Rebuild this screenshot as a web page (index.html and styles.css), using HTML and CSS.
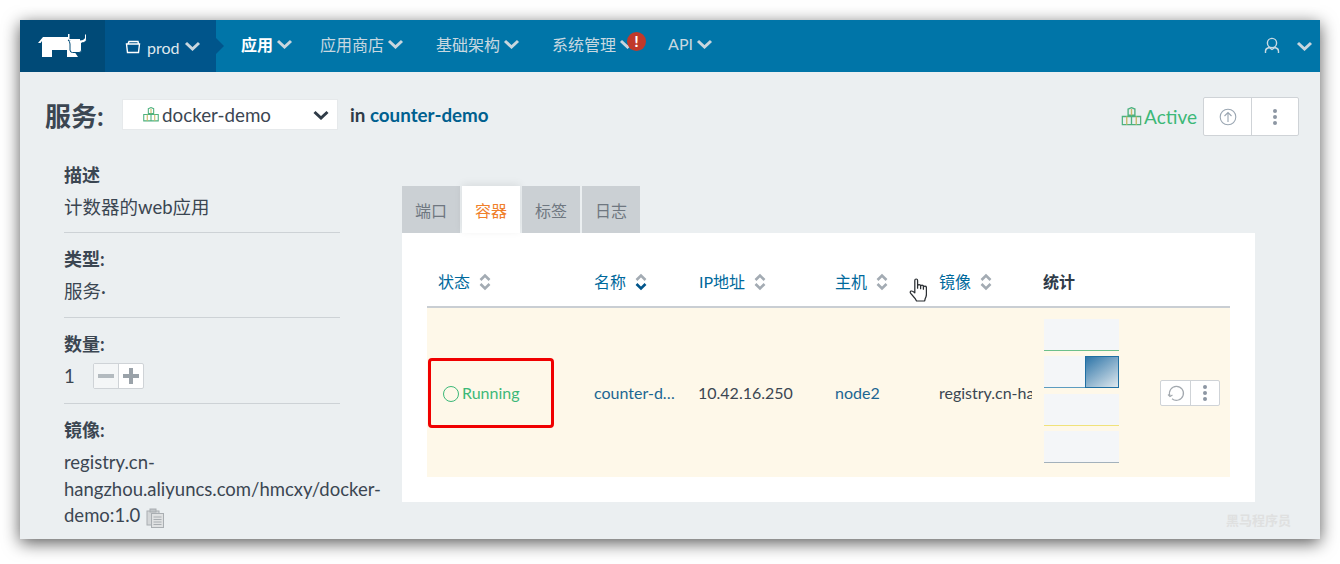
FILE: index.html
```html
<!DOCTYPE html>
<html lang="zh">
<head>
  <meta charset="UTF-8" />
  <title>服务 docker-demo</title>
  <link rel="stylesheet" href="styles.css">
</head>
<body>
  <div class="app">

    <!-- Header -->
    <header class="topbar">
      <a class="logo">
        <svg width="50" height="26" viewBox="0 0 50 26">
          <path fill="#fff" d="M5 5 H30 V2 H31.500 V7 H36 V19 L40 25 H29 V18 H14 V25 H4 V9 L2.500 11 H0 Z"/>
          <path fill="#fff" stroke="#004a77" d="M30 8 H42 Q46 8 46.500 6 V2 H48.500 V7 Q48.500 10.500 43.500 11 V18 Q43.500 20.500 41 20.500 H34.500 Q32 20.500 32 18 V12 Q32 9.500 30 8 Z"/>
          <path fill="#fff" d="M30 7 H42 V9 H33 Z"/>
        </svg>
      </a>
      <a class="env">
        <svg class="folder" width="16" height="14" viewBox="0 0 16 14"><path fill="none" stroke="#fff" stroke-width="1.4" d="M1.5 4 H14.5 L13.5 12.5 H2.5 Z M3 4 L4 1.5 H13 L13.5 4"/></svg>
        prod
        <svg class="chev" width="17" height="10" viewBox="0 0 17 10"><path d="M2 2 L8.500 8 L15 2"/></svg>
      </a>
      <nav class="mainnav">
        <a class="active">应用<svg class="chev" width="17" height="10" viewBox="0 0 17 10"><path d="M2 2 L8.500 8 L15 2"/></svg></a>
        <a>应用商店<svg class="chev" width="17" height="10" viewBox="0 0 17 10"><path d="M2 2 L8.500 8 L15 2"/></svg></a>
        <a>基础架构<svg class="chev" width="17" height="10" viewBox="0 0 17 10"><path d="M2 2 L8.500 8 L15 2"/></svg></a>
        <a class="has-alert">系统管理<svg class="chev" width="17" height="10" viewBox="0 0 17 10"><path d="M2 2 L8.500 8 L15 2"/></svg><span class="alert">!</span></a>
        <a>API<svg class="chev" width="17" height="10" viewBox="0 0 17 10"><path d="M2 2 L8.500 8 L15 2"/></svg></a>
      </nav>
      <div class="usermenu">
        <svg width="16" height="18" viewBox="0 0 16 18"><g fill="none" stroke="#c8dae3" stroke-width="1.4"><circle cx="8" cy="6" r="4.6"/><path d="M1.5 16 V14 Q1.5 11.5 5 10.5 L8 12.5 L11 10.5 Q14.500 11.5 14.500 14 V16"/></g></svg>
        <svg class="chev" width="17" height="10" viewBox="0 0 17 10"><path d="M2 2 L8.500 8 L15 2"/></svg>
      </div>
    </header>

    <!-- Titelzeile -->
    <div class="titlerow">
      <h1>服务:</h1>
      <div class="svc-select">
        <svg class="cubes" width="16" height="15" viewBox="0 0 15 14"><use href="#cubes-icon"/></svg>
        <span>docker-demo</span>
        <svg class="select-chev" width="16" height="10" viewBox="0 0 16 10"><path d="M1.5 2 L8 8 L14.500 2"/></svg>
      </div>
      <div class="stack-name">in <a>counter-demo</a></div>
      <div class="title-right">
        <span class="state">
          <svg width="21" height="19" viewBox="0 0 15 14"><use href="#cubes-icon"/></svg>
          Active
        </span>
        <div class="btn-group big">
          <button class="up-btn"><svg width="18" height="18" viewBox="0 0 18 18"><g fill="none" stroke="#9aa6b2" stroke-width="1.1"><circle cx="9" cy="9" r="7.800"/><path d="M9 14 V4.500 M5.500 8 L9 4.500 L12.500 8"/></g></svg></button>
          <button class="dots-btn"><span class="dots"><i></i><i></i><i></i></span></button>
        </div>
      </div>
    </div>

    <div class="content">
      <!-- Linke Spalte -->
      <aside class="info">
        <section>
          <div class="label">描述</div>
          <div class="value">计数器的web应用</div>
        </section>
        <section>
          <div class="label">类型:</div>
          <div class="value">服务·</div>
        </section>
        <section class="scale">
          <div class="label">数量:</div>
          <div class="value scale-row">
            <span class="count">1</span>
            <div class="stepper"><span class="minus"></span><span class="plus"></span></div>
          </div>
        </section>
        <section class="image">
          <div class="label">镜像:</div>
          <div class="value">registry.cn-hangzhou.aliyuncs.com/hmcxy/docker-demo:1.0
            <svg class="copy" width="19" height="20" viewBox="0 0 19 20"><g fill="none" stroke="#a9aeb2"><rect x="1" y="3" width="12" height="14" fill="#d4d7d9"/><rect x="5.500" y="5.500" width="12" height="14" fill="#dfe1e2"/><path d="M7.500 9 H15.500 M7.500 11.500 H15.500 M7.500 14 H15.500 M7.500 16.500 H15.500"/><rect x="4" y="1" width="6" height="3" fill="#bfc3c6"/></g></svg>
          </div>
        </section>
      </aside>

      <!-- Tabs und Tabelle -->
      <div class="detail">
        <ul class="tabs">
          <li>端口</li>
          <li class="current">容器</li>
          <li>标签</li>
          <li>日志</li>
        </ul>
        <div class="panel">
          <table>
            <colgroup>
              <col class="c-state"><col class="c-name"><col class="c-ip"><col class="c-host"><col class="c-image"><col class="c-stats"><col>
            </colgroup>
            <thead>
              <tr>
                <th class="first">状态<svg class="sort" width="12" height="18" viewBox="0 0 12 18"><path d="M1.500 7 L6 2.500 L10.500 7 M1.500 11 L6 15.500 L10.500 11"/></svg></th>
                <th>名称<svg class="sort sorted" width="12" height="18" viewBox="0 0 12 18"><path d="M1.500 7 L6 2.500 L10.500 7"/><path class="on" d="M1.500 11 L6 15.500 L10.500 11"/></svg></th>
                <th>IP地址<svg class="sort" width="12" height="18" viewBox="0 0 12 18"><path d="M1.500 7 L6 2.500 L10.500 7 M1.500 11 L6 15.500 L10.500 11"/></svg></th>
                <th>主机<svg class="sort" width="12" height="18" viewBox="0 0 12 18"><path d="M1.500 7 L6 2.500 L10.500 7 M1.500 11 L6 15.500 L10.500 11"/></svg></th>
                <th>镜像<svg class="sort" width="12" height="18" viewBox="0 0 12 18"><path d="M1.500 7 L6 2.500 L10.500 7 M1.500 11 L6 15.500 L10.500 11"/></svg></th>
                <th class="plain">统计</th>
                <th></th>
              </tr>
            </thead>
            <tbody>
              <tr>
                <td class="running"><span class="ring"></span>Running</td>
                <td class="link"><div class="clip dots-end">counter-demo-1</div></td>
                <td>10.42.16.250</td>
                <td class="link">node2</td>
                <td class="img-cell"><div class="clip">registry.cn-hangzhou.aliyuncs.com</div></td>
                <td class="stats">
                  <div class="spark green"></div>
                  <div class="spark blue"><span class="spark-fill"></span></div>
                  <div class="spark yellow"></div>
                  <div class="spark grey"></div>
                </td>
                <td>
                  <div class="btn-group small">
                    <button><svg width="18" height="18" viewBox="0 0 18 18"><g fill="none" stroke="#a3a9af" stroke-width="1.200"><path d="M3 12 A7 7 0 1 1 5 14.700"/><path d="M1 10.500 L3 12.500 L5.500 11"/></g></svg></button>
                    <button><span class="dots"><i></i><i></i><i></i></span></button>
                  </div>
                </td>
              </tr>
            </tbody>
          </table>
        </div>
      </div>
    </div>

    <!-- Overlays aus dem Screenshot -->
    <div class="redbox"></div>
    <svg class="hand" width="18" height="24" viewBox="0 0 15.500 23.500" preserveAspectRatio="none"><path fill="#fff" stroke="#2b2f33" stroke-width="1.100" stroke-linejoin="round" d="M5 13 V2.500 Q5 1 6.200 1 Q7.400 1 7.400 2.500 V10 V7.500 Q7.400 6.500 8.700 6.500 Q10 6.500 10 7.500 V10.500 V8 Q10 7 11.200 7 Q12.400 7 12.400 8 V11 V9 Q12.400 8 13.600 8 Q15 8 15 9.500 V16 Q15 18 14 20 L13.500 22.500 H6.500 L5.500 20.500 L1.500 15 Q0.500 13.500 1.800 12.800 Q3 12.300 5 14.500 Z"/></svg>
    <div class="watermark">黑马程序员</div>
  </div>

  <svg class="defs" width="0" height="0">
    <symbol id="cubes-icon" viewBox="0 0 15 14">
      <g fill="none" stroke-width="1">
        <path stroke="#4cb17e" d="M5 1.500 L7.500 .5 L10 1.500 V6 H5 Z M.7 7 H7.500 V13 H.7 Z M7.500 7 H14.300 V13 H7.500 Z"/>
        <path stroke="#c9b867" d="M4 7 V13 M11 7 V13 M7.500 1.500 V6"/>
      </g>
    </symbol>
  </svg>
</body>
</html>
```

FILE: styles.css
```css
html, body {
  margin: 0;
  padding: 0;
}
body {
  box-sizing: border-box;
  width: 1340px;
  height: 564px;
  padding: 20px;
  overflow: hidden;
  background-color: #fff;
  font-family: Lato, "Noto Sans CJK SC", sans-serif;
  font-size: 18.500px;
  color: #3b4652;
}
.app {
  position: relative;
  width: 1300px;
  height: 519px;
  background-color: #ebeff1;
  overflow: hidden;
}
.defs {
  position: absolute;
}

/* Schatten liegt aussen, overflow der app schneidet ihn nicht */
body::before {
  content: "";
  position: absolute;
  left: 20px;
  top: 20px;
  width: 1300px;
  height: 519px;
  box-shadow: 0 4px 16px rgba(0, 0, 0, 0.65);
}

/* Header */
.topbar {
  display: flex;
  align-items: stretch;
  height: 52px;
  background-color: #0075a8;
}
.logo {
  display: flex;
  align-items: center;
  justify-content: center;
  width: 85px;
  padding-bottom: 2px;
  box-sizing: border-box;
  background-color: #004a77;
}
.env {
  position: relative;
  display: flex;
  align-items: center;
  gap: 6px;
  width: 111px;
  box-sizing: border-box;
  padding: 2px 0 0 20px;
  background-color: #00558b;
  color: #dfe8ed;
  font-size: 16px;
}
.env .chev {
  margin: -2px 0 0 -2px;
}
.env::after {
  content: "";
  position: absolute;
  left: 100%;
  top: 18px;
  border-left: 8px solid #00558b;
  border-top: 8px solid transparent;
  border-bottom: 8px solid transparent;
}
.chev {
  flex: none;
}
.chev path, .select-chev path {
  fill: none;
  stroke: #c8d6de;
  stroke-width: 3;
}
.mainnav {
  display: flex;
  align-items: center;
  padding: 0 0 5px 25px;
  gap: 32px;
  font-size: 16px;
  color: #c8d8e0;
}
.mainnav a {
  position: relative;
  display: flex;
  align-items: center;
  gap: 3px;
}
.mainnav .active {
  margin-right: -5px;
  color: #fff;
  font-weight: bold;
}
.alert {
  position: absolute;
  right: -10px;
  top: 0;
  width: 19px;
  height: 19px;
  border-radius: 50%;
  background-color: #c0392b;
  color: #fff;
  font-size: 16px;
  font-weight: bold;
  line-height: 17px;
  text-align: center;
}
.usermenu {
  display: flex;
  align-items: center;
  gap: 16px;
  margin-left: auto;
  padding-right: 7px;
}

/* Titelzeile */
.titlerow {
  display: flex;
  align-items: center;
  height: 31px;
  padding: 27px 21px 0 25px;
}
h1 {
  margin: 0;
  width: 77px;
  font-size: 26px;
  font-weight: bold;
}
.svc-select {
  display: flex;
  align-items: center;
  box-sizing: border-box;
  width: 216px;
  height: 31px;
  padding: 0 8px 0 20px;
  background-color: #fff;
  border: 1px solid #e6e9eb;
  font-size: 18.800px;
}
.svc-select span {
  margin-left: 3px;
}
.select-chev {
  margin-left: auto;
}
.select-chev path {
  stroke: #2f3b47;
}
.stack-name {
  margin-left: 12px;
  font-size: 18.800px;
  font-weight: bold;
  color: #2f3b47;
}
.stack-name a {
  color: #00608f;
}
.title-right {
  display: flex;
  align-items: center;
  margin: 4px 0 0 auto;
}
.state {
  display: flex;
  align-items: center;
  gap: 2px;
  margin-right: 6px;
  font-size: 19px;
  color: #3cb878;
}
.btn-group {
  display: flex;
  border: 1px solid #cfd3d7;
  border-radius: 2px;
  background-color: #fff;
}
.btn-group button {
  display: flex;
  align-items: center;
  justify-content: center;
  padding: 0;
  border: none;
  background: none;
}
.btn-group button + button {
  border-left: 1px solid #cfd3d7;
}
.big {
  height: 37px;
}
.big .up-btn {
  width: 47px;
}
.big .dots-btn {
  width: 47px;
}
.small {
  width: 58px;
  height: 24px;
  margin-left: 1px;
}
.small button {
  width: 29px;
}
.dots {
  display: flex;
  flex-direction: column;
  gap: 2px;
}
.dots i {
  width: 4px;
  height: 4px;
  border-radius: 50%;
  background-color: #8d97a3;
}

/* Hauptbereich */
.content {
  display: flex;
  padding: 0 0 0 44px;
}
.info {
  flex: none;
  width: 320px;
  padding-top: 32px;
  margin-right: 18px;
}
.info section {
  width: 276px;
  padding-bottom: 11px;
  margin-bottom: 13px;
  border-bottom: 1px solid #cdd2d6;
}
.info section + section {
  padding-bottom: 13px;
}
.label {
  height: 26px;
  margin-bottom: 6px;
  font-size: 18px;
  line-height: 26px;
  font-weight: bold;
}
.value {
  line-height: 26.500px;
}
.info .image {
  width: 320px;
  border-bottom: none;
}
.scale-row {
  display: flex;
  align-items: center;
  height: 26px;
}
.info .scale {
  padding-bottom: 14px;
}
.count {
  width: 29px;
}
.stepper {
  display: flex;
  box-sizing: border-box;
  width: 51px;
  height: 26px;
  border: 1px solid #cfd3d7;
  border-radius: 2px;
  background-color: #fff;
}
.stepper span {
  position: relative;
  flex: 1;
}
.minus {
  background-color: #f4f6f7;
  border-right: 1px solid #cfd3d7;
}
.minus::before, .plus::before, .plus::after {
  content: "";
  position: absolute;
  background-color: #b3babf;
  left: 4px;
  right: 4px;
  top: 10px;
  height: 4px;
}
.plus::before, .plus::after {
  background-color: #9aa2a9;
}
.plus::after {
  left: 10px;
  right: 10px;
  top: 4px;
  height: 16px;
}
.copy {
  vertical-align: -6px;
  margin-left: 1px;
}

/* Tabs */
.detail {
  width: 853px;
  padding-top: 56px;
}
.tabs {
  display: flex;
  gap: 2px;
  margin: 0;
  padding: 0;
  list-style: none;
}
.tabs li {
  box-sizing: border-box;
  width: 58px;
  height: 47px;
  background-color: #cbd0d4;
  color: #6f7780;
  font-size: 16px;
  line-height: 50px;
  text-align: center;
}
.tabs .current {
  background-color: #fff;
  color: #f0802b;
  box-shadow: 0 -2px 8px rgba(0, 0, 0, 0.08);
}

/* Tabelle */
.panel {
  height: 269px;
  box-sizing: border-box;
  padding: 25px;
  background-color: #fff;
}
table {
  width: 803px;
  table-layout: fixed;
  border-collapse: collapse;
  font-size: 16px;
}
.c-state { width: 155px; }
.c-name { width: 105px; }
.c-ip { width: 136px; }
.c-host { width: 104px; }
.c-image { width: 105px; }
.c-stats { width: 116px; }
th {
  box-sizing: border-box;
  height: 49px;
  padding: 0 0 2px 12px;
  border-bottom: 2px solid #c9ced3;
  color: #00699c;
  font-weight: normal;
  text-align: left;
  white-space: nowrap;
}
th.first {
  padding-left: 11px;
}
th.plain {
  padding-left: 11px;
  color: #2f3b47;
  font-weight: bold;
}
.sort {
  margin-left: 9px;
  vertical-align: -3px;
}
.sort path {
  fill: none;
  stroke: #a3abb3;
  stroke-width: 2.600;
}
.sort .on {
  stroke: #00558b;
}
td {
  box-sizing: border-box;
  height: 170px;
  padding: 0 0 0 11px;
  background-color: #fef8e9;
  color: #3b4652;
  white-space: nowrap;
}
td.link {
  padding-left: 12px;
  color: #1c6692;
}
td.img-cell {
  padding-left: 12px;
}
td.running {
  padding-left: 16px;
  color: #3cb878;
}
.ring {
  display: inline-block;
  box-sizing: border-box;
  width: 16px;
  height: 16px;
  margin-right: 3px;
  border: 1.300px solid #3cb878;
  border-radius: 50%;
  vertical-align: -3px;
}
.clip {
  overflow: hidden;
}
.dots-end {
  width: 84px;
  text-overflow: ellipsis;
}
td.stats {
  padding: 0 0 3px 12px;
}
.spark {
  position: relative;
  box-sizing: border-box;
  width: 75px;
  height: 32px;
  margin-bottom: 5.500px;
  background-color: #f4f6f8;
  border-bottom: 1px solid #aaa;
}
.spark:last-child {
  margin-bottom: 0;
}
.green { border-bottom-color: #6cc08b; }
.blue { border-bottom-color: #5c9cc0; }
.yellow { border-bottom-color: #f0e27a; }
.grey { border-bottom-color: #a3b1bb; }
.spark-fill {
  position: absolute;
  right: 0;
  top: 0;
  bottom: -1px;
  box-sizing: border-box;
  width: 34px;
  border: 1px solid #1f6fa3;
  background: linear-gradient(145deg, #2e75a8, #dfe8ee);
}

/* Markierungen */
.redbox {
  position: absolute;
  left: 408px;
  top: 338px;
  box-sizing: border-box;
  width: 126px;
  height: 70px;
  border: 3px solid #f00000;
  border-radius: 4px;
}
.hand {
  position: absolute;
  left: 889px;
  top: 258px;
}
.watermark {
  position: absolute;
  left: 1206px;
  top: 490px;
  color: #dfe0e0;
  font-size: 13px;
  font-weight: bold;
}
```
